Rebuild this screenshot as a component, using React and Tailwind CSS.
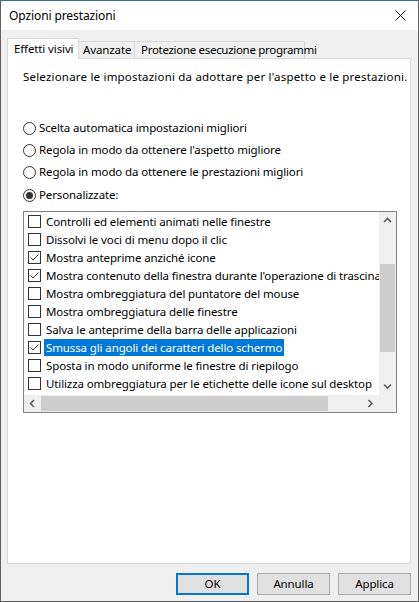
import React from "react";

const items = [
  { t: "Controlli ed elementi animati nelle finestre", c: false },
  { t: "Dissolvi le voci di menu dopo il clic", c: false },
  { t: "Mostra anteprime anziché icone", c: true },
  { t: "Mostra contenuto della finestra durante l'operazione di trascinamento", c: true },
  { t: "Mostra ombreggiatura del puntatore del mouse", c: false },
  { t: "Mostra ombreggiatura delle finestre", c: false },
  { t: "Salva le anteprime della barra delle applicazioni", c: false },
  { t: "Smussa gli angoli dei caratteri dello schermo", c: true, sel: true },
  { t: "Sposta in modo uniforme le finestre di riepilogo", c: false },
  { t: "Utilizza ombreggiatura per le etichette delle icone sul desktop", c: false },
  { t: "Utilizza selezione rettangolo traslucido", c: false },
];

function Radio({ on, label }) {
  return (
    <div className="flex items-center h-[22px]">
      <div className="w-[13px] h-[13px] rounded-full border border-[#333333] bg-white flex items-center justify-center">
        {on && <div className="w-[7px] h-[7px] rounded-full bg-[#333333]" />}
      </div>
      <span className="ml-[3px]">{label}</span>
    </div>
  );
}

function Check({ on }) {
  return (
    <div className="w-[13px] h-[13px] border border-[#333333] bg-white shrink-0 flex items-center justify-center">
      {on && (
        <svg width="11" height="11" viewBox="0 0 11 11">
          <polyline points="1.5,5.5 4,8 9.5,2.5" fill="none" stroke="#444" strokeWidth="1" />
        </svg>
      )}
    </div>
  );
}

function Arrow({ dir }) {
  const pts = {
    up: "1,5 4.5,1.5 8,5",
    down: "1,1.5 4.5,5 8,1.5",
    left: "5,1 1.5,4.5 5,8",
    right: "1.5,1 5,4.5 1.5,8",
  }[dir];
  const vertical = dir === "up" || dir === "down";
  return (
    <svg width={vertical ? 9 : 7} height={vertical ? 7 : 9} viewBox={vertical ? "0 0 9 7" : "0 0 7 9"}>
      <polyline points={pts} fill="none" stroke="#606060" strokeWidth="1.6" />
    </svg>
  );
}

function Btn({ children, def }) {
  return (
    <div
      className={
        "w-[73px] h-[22px] bg-[#e1e1e1] flex items-center justify-center " +
        (def ? "border-2 border-[#0078d7]" : "border border-[#adadad]")
      }
    >
      {children}
    </div>
  );
}

export default function App() {
  return (
    <div className="w-[419px] h-[602px] flex flex-col bg-[#f0f0f0] border border-[#5f5f5f] border-t-[#3d6f80] text-[11.5px] tracking-[-0.12px] text-black font-['Segoe_UI','Noto_Sans',sans-serif] leading-[16px] overflow-hidden">
      <div className="h-[29px] bg-white flex items-center justify-between pl-[8px] pr-[12px] shrink-0">
        <span className="text-[12px] tracking-[-0.1px]">Opzioni prestazioni</span>
        <svg width="11" height="11" viewBox="0 0 11 11">
          <path d="M0.5 0.5 L10.5 10.5 M10.5 0.5 L0.5 10.5" stroke="#111" strokeWidth="1" />
        </svg>
      </div>
      <div className="flex-1 flex flex-col pl-[6px] pr-[7px] pt-[8px] pb-[6px]">
        <div className="h-[20px] flex items-end shrink-0">
          <div className="relative z-10 w-[72px] h-[21px] -mb-px bg-white border border-b-0 border-[#d9d9d9] pl-[6px] pt-[2px] whitespace-nowrap">
            Effetti visivi
          </div>
          <div className="w-[56px] h-[17px] border border-l-0 border-b-0 border-[#d9d9d9] pl-[4px] leading-[16px] whitespace-nowrap">
            Avanzate
          </div>
          <div className="w-[170px] h-[17px] border border-l-0 border-b-0 border-[#d9d9d9] pl-[6px] leading-[16px] whitespace-nowrap tracking-[-0.3px]">
            Protezione esecuzione programmi
          </div>
        </div>
        <div className="flex-1 bg-white border border-[#d9d9d9] pl-[15px] pt-[10px] flex flex-col">
          <div className="whitespace-nowrap tracking-[0.2px]">Selezionare le impostazioni da adottare per l'aspetto e le prestazioni.</div>
          <div className="mt-[32px] flex flex-col">
            <Radio label="Scelta automatica impostazioni migliori" />
            <Radio label="Regola in modo da ottenere l'aspetto migliore" />
            <Radio label="Regola in modo da ottenere le prestazioni migliori" />
            <div className="h-[1px]" />
            <Radio on label="Personalizzate:" />
          </div>
          <div className="mt-[5px] w-[374px] h-[202px] border border-[#828282] grid grid-cols-[355px_17px] grid-rows-[183px_17px]">
            <div className="overflow-hidden flex flex-col">
              {items.map((it, i) => (
                <div key={i} className="h-[18px] shrink-0 flex items-center pl-[4px] whitespace-nowrap">
                  <Check on={it.c} />
                  <span
                    className={
                      "ml-[3px] px-[2px] h-[17px] leading-[17px] " +
                      (it.sel ? "bg-[#0078d7] text-white" : "")
                    }
                  >
                    {it.t}
                  </span>
                </div>
              ))}
            </div>
            <div className="bg-[#f0f0f0] flex flex-col">
              <div className="h-[17px] flex items-center justify-center">
                <Arrow dir="up" />
              </div>
              <div className="h-[35px]" />
              <div className="h-[88px] bg-[#cdcdcd] mx-[1px]" />
              <div className="flex-1" />
              <div className="h-[17px] flex items-center justify-center">
                <Arrow dir="down" />
              </div>
            </div>
            <div className="bg-[#f0f0f0] flex">
              <div className="w-[17px] flex items-center justify-center">
                <Arrow dir="left" />
              </div>
              <div className="w-[287px] bg-[#cdcdcd] my-[1px]" />
              <div className="flex-1" />
              <div className="w-[17px] flex items-center justify-center">
                <Arrow dir="right" />
              </div>
            </div>
            <div className="bg-[#f0f0f0]" />
          </div>
        </div>
        <div className="mt-[9px] flex justify-end gap-[8px] shrink-0">
          <Btn def>OK</Btn>
          <Btn>Annulla</Btn>
          <Btn>Applica</Btn>
        </div>
      </div>
    </div>
  );
}
